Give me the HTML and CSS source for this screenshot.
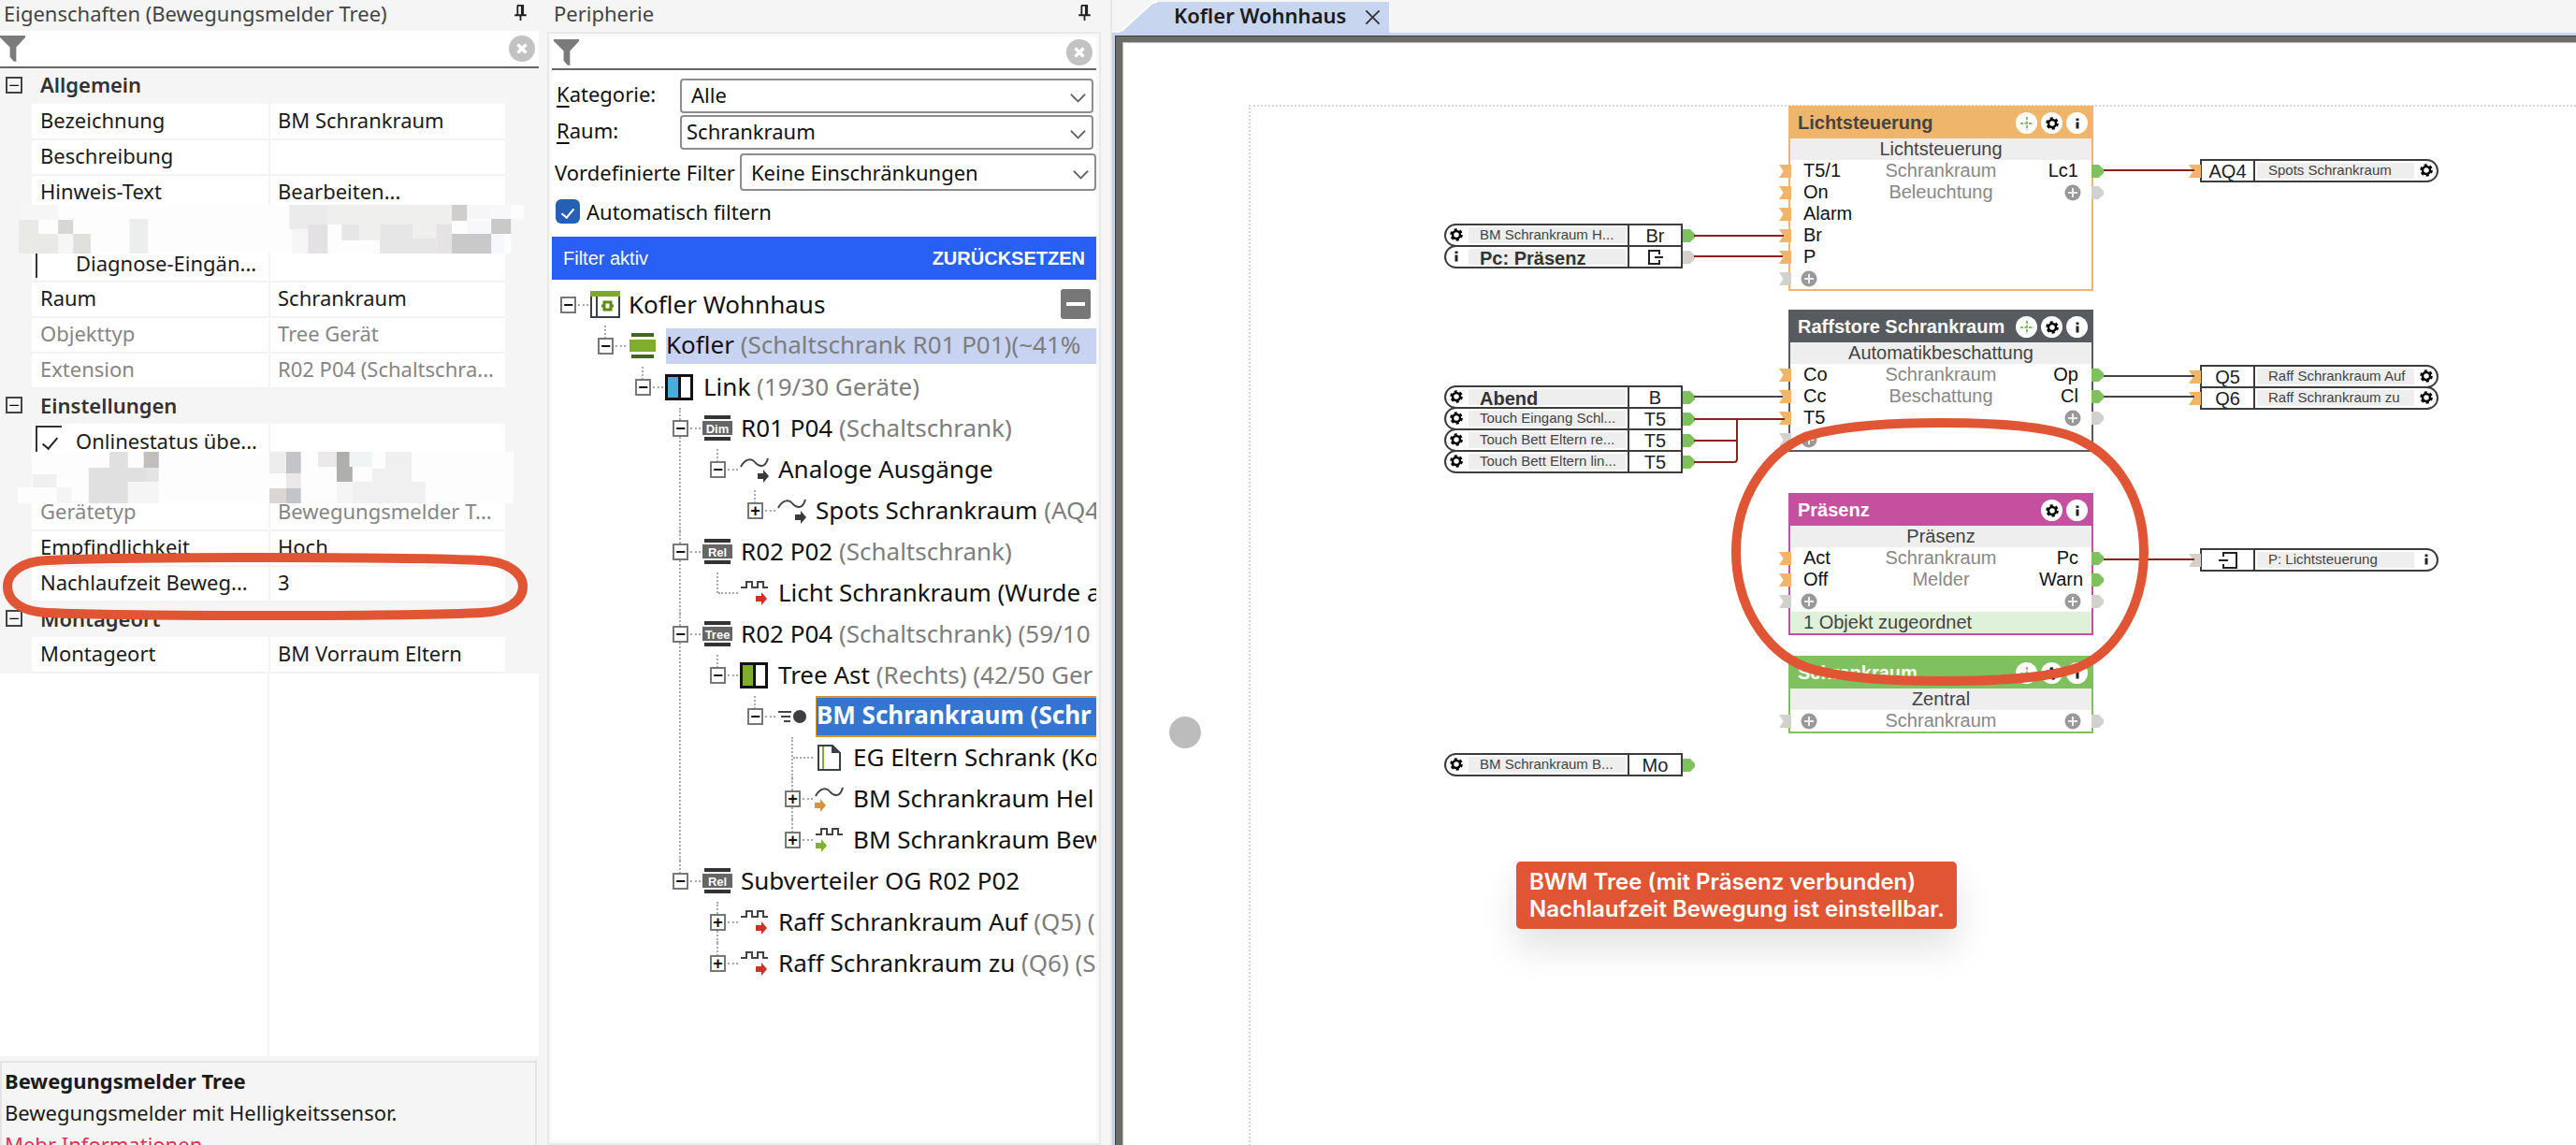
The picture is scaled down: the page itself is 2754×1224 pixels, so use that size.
FILE: index.html
```html
<!DOCTYPE html>
<html lang="de">
<head>
<meta charset="utf-8">
<title>Kofler Wohnhaus</title>
<link rel="stylesheet" href="styles.css">
</head>
<body>
<svg class="defs" aria-hidden="true">
  <symbol id="pin" viewBox="0 0 16 20"><path d="M4 1h8M4.500 1v11M11 1v11M9.500 1v11M1 12.500h14M8 13v6" fill="none" stroke="#222" stroke-width="2"/></symbol>
  <symbol id="funnel" viewBox="0 0 28 30"><path d="M0 0h28v2L18 13v16l-3-.5-4-5V13L0 2z" fill="#7b7b7b"/></symbol>
  <symbol id="clear" viewBox="0 0 28 28"><circle cx="14" cy="14" r="14" fill="#c2c2c2"/><path d="M9.500 9.500l9 9M18.500 9.500l-9 9" stroke="#fff" stroke-width="3.500"/></symbol>
  <symbol id="chevron" viewBox="0 0 18 12"><path d="M1 1.500l8 8 8-8" fill="none" stroke="#666" stroke-width="2"/></symbol>
  <symbol id="house" viewBox="0 0 32 30"><path d="M1 3v25h30V3" fill="#fff" stroke="#3b4045" stroke-width="2"/><path d="M7 5v22" stroke="#3b4045" stroke-width="2"/><path d="M0 0h32v6H0z" fill="#7ea92c"/><path d="M15 12h7v8h-7zM12 16h3M22 16h3" fill="none" stroke="#5f8a16" stroke-width="3"/></symbol>
  <symbol id="server" viewBox="0 0 32 30"><path d="M2 7h28v13H2z" fill="#7fae2f"/><path d="M4 0h24v4H4zM4 23h24v4H4z" fill="#44661a"/></symbol>
  <symbol id="link" viewBox="0 0 30 28"><path d="M1.500 1.500h27v25h-27z" fill="#fff" stroke="#111" stroke-width="3"/><path d="M3 3h12v22H3z" fill="#4bacd9"/><path d="M15.500 2v24" stroke="#111" stroke-width="3"/></symbol>
  <symbol id="branch" viewBox="0 0 30 28"><path d="M1.500 1.500h27v25h-27z" fill="#fff" stroke="#111" stroke-width="3"/><path d="M3 3h12v22H3z" fill="#7fae2f"/><path d="M15.500 2v24" stroke="#111" stroke-width="3"/></symbol>
  <symbol id="rail" viewBox="0 0 32 28"><path d="M2 0h28v4H2zM2 23h28v4H2z" fill="#333"/><path d="M0 6h32v15H0z" fill="#666"/></symbol>
  <symbol id="wave" viewBox="0 0 32 14"><path d="M1 11C5 3 12 1 16 6s11 7 14-4" fill="none" stroke="#444" stroke-width="2"/></symbol>
  <symbol id="pulse" viewBox="0 0 32 10"><path d="M1 7h6V1h6v6h6V1h6v6h5" fill="none" stroke="#444" stroke-width="2"/></symbol>
  <symbol id="arrow" viewBox="0 0 12 14"><path d="M0 4h6V0l6 7-6 7v-4H0z" fill="currentColor"/></symbol>
  <symbol id="motion" viewBox="0 0 32 16"><path d="M1 3h14M4 8h10M7 13h7" stroke="#444" stroke-width="2"/><circle cx="24" cy="8" r="7" fill="#3f3f3f"/></symbol>
  <symbol id="page" viewBox="0 0 26 28"><path d="M1 1h15l8 8v18H1z" fill="#fff" stroke="#3b4045" stroke-width="2"/><path d="M15 0v9h9z" fill="#3b4045"/><path d="M6 2v24" stroke="#7fae2f" stroke-width="2"/></symbol>
  <symbol id="gear" viewBox="0 0 14 14"><circle cx="7" cy="7" r="4" fill="none" stroke="#000" stroke-width="2.500"/><circle cx="7" cy="7" r="5.800" fill="none" stroke="#000" stroke-width="2" stroke-dasharray="3.070 3"/></symbol>
  <symbol id="info" viewBox="0 0 14 14"><path d="M5.500 1.500h3v2.500h-3zM5.500 5.500h3v7h-3z" fill="#222"/></symbol>
  <symbol id="move" viewBox="0 0 14 14"><path d="M7 0v14M0 7h14" stroke="#7fc15e" stroke-width="2" stroke-dasharray="3 1.500"/></symbol>
  <symbol id="plus" viewBox="0 0 18 18"><circle cx="9" cy="9" r="8.500" fill="#999"/><path d="M9 4v10M4 9h10" stroke="#eee" stroke-width="2"/></symbol>
  <symbol id="ref-out" viewBox="0 0 16 16"><path d="M12 5V1H1v14h11v-4M7 8h9" fill="none" stroke="#222" stroke-width="2"/></symbol>
  <symbol id="ref-in" viewBox="0 0 20 18"><path d="M5 5V1h14v16H5v-4M0 9h10" fill="none" stroke="#222" stroke-width="2"/></symbol>
</svg>

<div class="app">
  <section class="dock props">
    <header class="dock-title"><h2>Eigenschaften (Bewegungsmelder Tree)</h2><button class="plain" aria-label="Anheften"><svg class="pin"><use href="#pin"/></svg></button></header>
    <div class="filter"><svg class="funnel"><use href="#funnel"/></svg><input type="text" aria-label="Eigenschaften filtern"><button class="plain" aria-label="Filter löschen"><svg class="clear"><use href="#clear"/></svg></button></div>
    <div class="grid-wrap">
      <table class="grid">
        <colgroup><col class="c-tog"><col class="c-name"><col class="c-val"></colgroup>
        <tbody>
          <tr class="group"><td><button class="tog" aria-label="Einklappen">−</button></td><th colspan="2">Allgemein</th></tr>
          <tr><td></td><th>Bezeichnung</th><td>BM Schrankraum</td></tr>
          <tr><td></td><th>Beschreibung</th><td></td></tr>
          <tr><td></td><th>Hinweis-Text</th><td>Bearbeiten...</td></tr>
          <tr><td></td><th></th><td></td></tr>
          <tr><td></td><th class="tick"><label><input type="checkbox">Diagnose-Eingän...</label></th><td></td></tr>
          <tr><td></td><th>Raum</th><td>Schrankraum</td></tr>
          <tr class="off"><td></td><th>Objekttyp</th><td>Tree Gerät</td></tr>
          <tr class="off"><td></td><th>Extension</th><td>R02 P04 (Schaltschra...</td></tr>
          <tr class="group"><td><button class="tog" aria-label="Einklappen">−</button></td><th colspan="2">Einstellungen</th></tr>
          <tr><td></td><th class="tick"><label><input type="checkbox" checked>Onlinestatus übe...</label></th><td></td></tr>
          <tr><td></td><th></th><td></td></tr>
          <tr class="off"><td></td><th>Gerätetyp</th><td>Bewegungsmelder T...</td></tr>
          <tr><td></td><th>Empfindlichkeit</th><td>Hoch</td></tr>
          <tr><td></td><th>Nachlaufzeit Beweg...</th><td>3</td></tr>
          <tr class="group"><td><button class="tog" aria-label="Einklappen">−</button></td><th colspan="2">Montageort</th></tr>
          <tr><td></td><th>Montageort</th><td>BM Vorraum Eltern</td></tr>
        </tbody>
      </table>
    </div>
    <div class="grid-rest"></div>
    <footer class="about"><div><strong>Bewegungsmelder Tree</strong><p>Bewegungsmelder mit Helligkeitssensor.</p><a href="#info">Mehr Informationen</a></div></footer>

    <svg class="mosaic mosaic-a" viewBox="52 657 1411 156" preserveAspectRatio="none">
      <path fill="#fdfdfd" d="M52 657h1411v45h-36v111H52z"/>
      <path fill="#f6f6f6" d="M52 657h110v48H52zM162 750h42v63h-42zM815 735h45v78h-45zM1304 657h68v45h-68z"/>
      <path fill="#e9e9e6" d="M52 705h55v45h55v63H52z"/>
      <path fill="#d8d7d4" d="M162 705h42v45h-42z"/><path fill="#dfdfdc" d="M204 750h49v63h-49z"/>
      <path fill="#eceeed" d="M361 702h52v111h-52z"/>
      <path fill="#ebebeb" d="M808 657h107v63h-55v15h-52z"/>
      <path fill="#efefee" d="M915 657h347v63h-44v45h-66v-45h-92v50h-56v-50h-89z"/>
      <path fill="#e3e1e4" d="M860 720h55v93h-55z"/><path fill="#e6e6e6" d="M954 720h50v50h-50zM1061 720h91v45h66v48h-157z"/>
      <path fill="#e6e3e5" d="M1218 720h44v93h-44z"/>
      <path fill="#f6f8fc" d="M1304 708h68v42h-68zM1372 657h55v45h-55zM1372 750h37v63h-37z"/>
      <path fill="#cfcecd" d="M1262 657h42v51h-42z"/><path fill="#c9c9c9" d="M1372 702h55v48h-55zM1262 750h110v63h-110z"/>
    </svg>
    <svg class="mosaic mosaic-b" viewBox="50 249 1385 165" preserveAspectRatio="none">
      <path fill="#fdfdfd" d="M91 249h1344v165H50v-51h41z"/>
      <path fill="#e0e0e0" d="M306 249h52v51h50v45h-50v69H248V300h58z"/><path fill="#c0bfbe" d="M402 249h42v51h-42z"/>
      <path fill="#e4e4e4" d="M408 300h36v45h-36z"/><path fill="#f5f5f5" d="M358 345h86v69h-86zM159 363h42v51h-42zM941 345h44v69h-44z"/><path fill="#f0f0f0" d="M91 321h68v42H91zM1077 249h73v96h39v69H985v-69h55v-42h37z"/>
      <path fill="#eeedeb" d="M753 249h47v69h-47z"/><path fill="#c4c5cb" d="M800 249h41v69h-41zM800 366h41v48h-41z"/><path fill="#d9d6d3" d="M753 366h47v48h-47z"/>
      <path fill="#ebe8ea" d="M889 249h52v48h-52zM800 318h41v48h-41z"/><path fill="#afafae" d="M941 249h36v48h8v48h-44z"/><path fill="#f1f4f4" d="M977 249h63v48h-63z"/>
    </svg>
    <svg class="ring ring-row" viewBox="0 0 570 80"><path d="M8 40C8 25 24 13 50 12 150 8 420 8 515 12 541 13 559 25 559 40 559 56 541 67 515 68 420 72 150 72 50 68 24 67 8 56 8 40z"/></svg>
  </section>

  <section class="dock periph">
    <header class="dock-title"><h2>Peripherie</h2><button class="plain" aria-label="Anheften"><svg class="pin"><use href="#pin"/></svg></button></header>
    <div class="frame"><div class="frame-in">
      <div class="filter"><svg class="funnel"><use href="#funnel"/></svg><input type="text" aria-label="Peripherie filtern"><button class="plain" aria-label="Filter löschen"><svg class="clear"><use href="#clear"/></svg></button></div>
      <form class="criteria">
        <div class="line"><label for="kat"><u>K</u>ategorie:</label><span class="pick wide"><select id="kat"><option>Alle</option></select><svg><use href="#chevron"/></svg></span></div>
        <div class="line"><label for="raum"><u>R</u>aum:</label><span class="pick"><select id="raum"><option>Schrankraum</option></select><svg><use href="#chevron"/></svg></span></div>
        <div class="line preset"><label for="vor">Vordefinierte Filter</label><span class="pick wide"><select id="vor"><option>Keine Einschränkungen</option></select><svg><use href="#chevron"/></svg></span></div>
        <label class="auto"><input type="checkbox" checked>Automatisch filtern</label>
      </form>
      <div class="active"><span>Filter aktiv</span><button class="plain">ZURÜCKSETZEN</button></div>
      <div class="tree-wrap">
        <button class="collapse" aria-label="Alle einklappen"></button>
        <ul class="tree">
          <li><div class="row"><button class="tog">−</button><i></i><svg class="ico" height="30"><use href="#house" width="32" height="30"/></svg><span class="name">Kofler Wohnhaus</span></div>
          <ul>
            <li><div class="row"><button class="tog">−</button><i></i><svg class="ico" height="28"><use href="#server" width="32" height="30"/></svg><span class="name marked">Kofler <em>(Schaltschrank R01 P01)(~41%</em></span></div>
            <ul>
              <li><div class="row"><button class="tog">−</button><i></i><svg class="ico" height="28"><use href="#link" width="30" height="28"/></svg><span class="name">Link <em>(19/30 Geräte)</em></span></div>
              <ul>
                <li><div class="row"><button class="tog">−</button><i></i><svg class="ico" height="28"><use href="#rail" width="32" height="28"/><text x="16" y="19">Dim</text></svg><span class="name">R01 P04 <em>(Schaltschrank)</em></span></div>
                <ul>
                  <li><div class="row"><button class="tog">−</button><i></i><svg class="ico" height="28"><use href="#wave" width="32" height="14"/><use href="#arrow" class="a-dark" x="19" y="14" width="12" height="14"/></svg><span class="name">Analoge Ausgänge</span></div>
                  <ul>
                    <li><div class="row"><button class="tog">+</button><i></i><svg class="ico" height="28"><use href="#wave" width="32" height="14"/><use href="#arrow" class="a-dark" x="19" y="14" width="12" height="14"/></svg><span class="name">Spots Schrankraum <em>(AQ4</em></span></div></li>
                  </ul></li>
                </ul></li>
                <li><div class="row"><button class="tog">−</button><i></i><svg class="ico" height="28"><use href="#rail" width="32" height="28"/><text x="16" y="19">Rel</text></svg><span class="name">R02 P02 <em>(Schaltschrank)</em></span></div>
                <ul>
                  <li><div class="row leaf"><i></i><svg class="ico" height="26"><use href="#pulse" width="32" height="10"/><use href="#arrow" class="a-red" x="17" y="12" width="12" height="14"/></svg><span class="name">Licht Schrankraum (Wurde a</span></div></li>
                </ul></li>
                <li><div class="row"><button class="tog">−</button><i></i><svg class="ico" height="28"><use href="#rail" width="32" height="28"/><text x="16" y="19">Tree</text></svg><span class="name">R02 P04 <em>(Schaltschrank) (59/10</em></span></div>
                <ul>
                  <li><div class="row"><button class="tog">−</button><i></i><svg class="ico" height="28"><use href="#branch" width="30" height="28"/></svg><span class="name">Tree Ast <em>(Rechts) (42/50 Ger</em></span></div>
                  <ul>
                    <li><div class="row"><button class="tog">−</button><i></i><svg class="ico" height="16"><use href="#motion" width="32" height="16"/></svg><span class="name chosen">BM Schrankraum (Schr</span></div>
                    <ul>
                      <li><div class="row leaf"><i></i><svg class="ico" height="28"><use href="#page" x="3" width="26" height="28"/></svg><span class="name">EG Eltern Schrank (Ko</span></div></li>
                      <li><div class="row"><button class="tog">+</button><i></i><svg class="ico" height="28"><use href="#wave" width="32" height="14"/><use href="#arrow" class="a-amber" x="0" y="14" width="12" height="14"/></svg><span class="name">BM Schrankraum Hel</span></div></li>
                      <li><div class="row"><button class="tog">+</button><i></i><svg class="ico" height="26"><use href="#pulse" width="32" height="10"/><use href="#arrow" class="a-green" x="1" y="12" width="12" height="14"/></svg><span class="name">BM Schrankraum Bew</span></div></li>
                    </ul></li>
                  </ul></li>
                </ul></li>
                <li><div class="row"><button class="tog">−</button><i></i><svg class="ico" height="28"><use href="#rail" width="32" height="28"/><text x="16" y="19">Rel</text></svg><span class="name">Subverteiler OG R02 P02</span></div>
                <ul>
                  <li><div class="row"><button class="tog">+</button><i></i><svg class="ico" height="26"><use href="#pulse" width="32" height="10"/><use href="#arrow" class="a-red" x="17" y="12" width="12" height="14"/></svg><span class="name">Raff Schrankraum Auf <em>(Q5) (</em></span></div></li>
                  <li><div class="row"><button class="tog">+</button><i></i><svg class="ico" height="26"><use href="#pulse" width="32" height="10"/><use href="#arrow" class="a-red" x="17" y="12" width="12" height="14"/></svg><span class="name">Raff Schrankraum zu <em>(Q6) (S</em></span></div></li>
                </ul></li>
              </ul></li>
            </ul></li>
          </ul></li>
        </ul>
      </div>
    </div></div>
  </section>

  <main class="editor">
    <nav class="tabs"><div class="tab"><svg class="tab-bg" viewBox="0 0 290 35"><path d="M0 35 34 4Q37 2 40 2H288V35z" fill="#c7d5ee"/><path d="M2 33 34 4Q37 2 40 2" fill="none" stroke="#fff" stroke-width="2"/></svg><a href="#kofler">Kofler Wohnhaus</a><button class="plain" aria-label="Schließen"><svg class="x" viewBox="0 0 18 18"><path d="M1.500 1.500l15 15M16.500 1.500l-15 15" stroke="#333" stroke-width="2"/></svg></button></div></nav>
    <div class="canvas">
      <div class="sheet"></div>
      <span class="dot"></span>

      <div class="pill src p1"><svg class="mark"><use href="#gear"/></svg><span class="small">BM Schrankraum H...</span><b>Br</b></div>
      <div class="pill src p2 grey"><svg class="mark"><use href="#info"/></svg><span>Pc: Präsenz</span><b><svg class="ref"><use href="#ref-out"/></svg></b></div>
      <div class="pill src p3"><svg class="mark"><use href="#gear"/></svg><span>Abend</span><b>B</b></div>
      <div class="pill src p4"><svg class="mark"><use href="#gear"/></svg><span class="small">Touch Eingang Schl...</span><b>T5</b></div>
      <div class="pill src p5"><svg class="mark"><use href="#gear"/></svg><span class="small">Touch Bett Eltern re...</span><b>T5</b></div>
      <div class="pill src p6"><svg class="mark"><use href="#gear"/></svg><span class="small">Touch Bett Eltern lin...</span><b>T5</b></div>
      <div class="pill src p7"><svg class="mark"><use href="#gear"/></svg><span class="small">BM Schrankraum B...</span><b>Mo</b></div>

      <section class="block light">
        <header><h3>Lichtsteuerung</h3><button><svg><use href="#move"/></svg></button><button><svg><use href="#gear"/></svg></button><button><svg><use href="#info"/></svg></button></header>
        <p class="kind">Lichtsteuerung</p>
        <div class="ports">
          <ul class="in"><li>T5/1</li><li>On</li><li>Alarm</li><li>Br</li><li>P</li><li class="more"><svg><use href="#plus"/></svg></li></ul>
          <p class="place">Schrankraum<br>Beleuchtung</p>
          <ul class="out"><li>Lc1</li><li class="more"><svg><use href="#plus"/></svg></li></ul>
        </div>
      </section>
      <section class="block blind">
        <header><h3>Raffstore Schrankraum</h3><button><svg><use href="#move"/></svg></button><button><svg><use href="#gear"/></svg></button><button><svg><use href="#info"/></svg></button></header>
        <p class="kind">Automatikbeschattung</p>
        <div class="ports">
          <ul class="in"><li>Co</li><li>Cc</li><li>T5</li><li class="more"><svg><use href="#plus"/></svg></li></ul>
          <p class="place">Schrankraum<br>Beschattung</p>
          <ul class="out"><li>Op</li><li>Cl</li><li class="more"><svg><use href="#plus"/></svg></li></ul>
        </div>
      </section>
      <section class="block presence">
        <header><h3>Präsenz</h3><button><svg><use href="#gear"/></svg></button><button><svg><use href="#info"/></svg></button></header>
        <p class="kind">Präsenz</p>
        <div class="ports">
          <ul class="in"><li>Act</li><li>Off</li><li class="more"><svg><use href="#plus"/></svg></li></ul>
          <p class="place">Schrankraum<br>Melder</p>
          <ul class="out"><li>Pc</li><li>Warn</li><li class="more"><svg><use href="#plus"/></svg></li></ul>
        </div>
        <p class="note">1 Objekt zugeordnet</p>
      </section>
      <section class="block central">
        <header><h3>Schrankraum</h3><button><svg><use href="#move"/></svg></button><button><svg><use href="#gear"/></svg></button><button><svg><use href="#info"/></svg></button></header>
        <p class="kind">Zentral</p>
        <div class="ports">
          <ul class="in"><li class="more"><svg><use href="#plus"/></svg></li></ul>
          <p class="place">Schrankraum</p>
          <ul class="out"><li class="more"><svg><use href="#plus"/></svg></li></ul>
        </div>
      </section>

      <div class="pill dst q1"><b>AQ4</b><span class="small">Spots Schrankraum</span><svg class="mark"><use href="#gear"/></svg></div>
      <div class="pill dst q2"><b>Q5</b><span class="small">Raff Schrankraum Auf</span><svg class="mark"><use href="#gear"/></svg></div>
      <div class="pill dst q3"><b>Q6</b><span class="small">Raff Schrankraum zu</span><svg class="mark"><use href="#gear"/></svg></div>
      <div class="pill dst q4 grey"><b><svg class="ref-in"><use href="#ref-in"/></svg></b><span class="small">P: Lichtsteuerung</span><svg class="mark"><use href="#info"/></svg></div>

      <svg class="wires" width="1554" height="900">
        <g class="analog"><path d="M611 207h96M611 229h95M611 403h97M611 426h46M611 449h43q3 0 3-3V403M1049 137h97M1049 553h97"/></g>
        <g class="digital"><path d="M611 379h95M1049 357h97M1049 379h97"/></g>
      </svg>
      <svg class="ring ring-block" viewBox="0 0 460 300"><path d="M16 150C16 90 50 44 90 27 125 15 180 12 236 12 300 12 355 16 383 30 425 50 452 95 452 150 452 205 425 255 383 273 355 284 300 288 236 288 180 288 125 285 90 273 45 255 16 205 16 150z"/></svg>
      <p class="callout">BWM Tree (mit Präsenz verbunden)<br>Nachlaufzeit Bewegung ist einstellbar.</p>
    </div>
  </main>
</div>
</body>
</html>
```
FILE: styles.css
```css
* { box-sizing: border-box; }
html, body { height: 100%; }
body { margin: 0; overflow: hidden; background: #f5f5f5; color: #1b1b1b; font: 22px/36px "Noto Sans", "Open Sans", sans-serif; }
h2, h3, p, ul { margin: 0; padding: 0; font-weight: 400; font-size: inherit; }
ul { list-style: none; }
em { font-style: normal; color: #7d7d7d; }
.defs { position: absolute; width: 0; height: 0; }
.plain { border: 0; padding: 0; background: none; color: inherit; font: inherit; display: flex; }
.app { display: flex; height: 100vh; }

/* docked panels */
.dock { position: relative; display: flex; flex-direction: column; flex: none; overflow: hidden; }
.props { width: 583px; padding-right: 7px; }
.periph { width: 604px; padding: 0 10px 0 2px; }
.dock-title { display: flex; align-items: center; justify-content: space-between; height: 33px; padding: 0 12px 6px 4px; color: #444; line-height: 26px; }
.periph .dock-title { height: 34px; padding: 0 10px 7px 7px; }
.pin { width: 15px; height: 18px; }
.filter { display: flex; align-items: center; flex: none; height: 40px; padding: 0 4px 0 0; background: #fff; border-bottom: 2px solid #666; }
.filter input { flex: 1; min-width: 0; border: 0; outline: 0; background: none; font: inherit; }
.funnel { width: 27px; height: 29px; }
.clear { width: 28px; height: 28px; }

/* property grid */
.grid-wrap { background: #f5f5f5; }
.grid { width: 540px; table-layout: fixed; border-collapse: collapse; }
.c-tog { width: 34px; }
.c-name { width: 254px; }
.grid td, .grid th { height: 38px; padding: 0 0 4px 8px; font-weight: 400; text-align: left; line-height: 32px; background: #fff; border-bottom: 2px solid #f3f3f3; white-space: nowrap; overflow: hidden; }
.grid th { padding-left: 9px; border-right: 2px solid #f3f3f3; }
.grid tr td:first-child { background: none; border: 0; padding: 0 0 2px 6px; }
.grid .group th { background: none; font-weight: 600; color: #333; border: 0; }
.off { color: #858585; }
.tog { display: block; width: 18px; height: 18px; border: 2px solid #444; background: #fff; padding: 0; color: #111; font: 700 20px/13px "Liberation Sans", Arial, sans-serif; }
.grid .tog { background: none; font-weight: 400; }
.grid .tick { padding: 0 0 2px 4px; }
.tick label { display: flex; align-items: center; gap: 15px; height: 32px; }
.tick input { appearance: none; width: 28px; height: 32px; margin: 0; border: solid #333; border-width: 2px 0 0 2px; display: grid; place-items: center; }
.tick input:checked::before { content: ""; width: 7px; height: 14px; border: solid #222; border-width: 0 2px 2px 0; transform: rotate(40deg); }
.grid-rest { flex: 1; width: 576px; background: linear-gradient(90deg, #fff 286px, #f3f3f3 286px, #f3f3f3 288px, #fff 288px); }
.about { flex: none; height: 95px; padding-top: 5px; overflow: hidden; line-height: 34px; }
.about div { width: 574px; height: 120px; padding: 2px 0 0 3px; border: 2px solid #e4e4e4; background: #f5f5f5; }
.about strong { font-weight: 700; }
.about a { display: block; color: #e0324f; text-decoration: none; }
.mosaic { position: absolute; }
.mosaic-a { left: 20px; top: 219px; width: 540px; height: 52px; }
.mosaic-b { left: 19px; top: 483px; width: 530px; height: 55px; }

/* hand-drawn markers */
.ring { position: absolute; fill: none; stroke: #e05533; stroke-width: 10; }
.ring-row { left: 0; top: 587px; width: 570px; height: 80px; }

/* peripherals */
.frame { flex: 1; padding: 3px; border: 2px solid #e9e9e9; background: #f8f8f8; min-height: 0; }
.frame-in { height: 100%; background: #fff; overflow: hidden; }
.frame .filter { height: 36px; padding-left: 2px; }
.criteria { padding: 8px 3px 14px 5px; color: #111; }
.line { display: flex; height: 37px; margin-bottom: 2px; align-items: center; }
.line label { width: 132px; flex: none; padding-bottom: 4px; }
.line u { text-decoration-thickness: 2px; text-underline-offset: 4px; }
.pick { position: relative; flex: 1; height: 100%; }
.pick select { appearance: none; width: 100%; height: 100%; padding: 0 40px 3px 5px; border: 2px solid #8d8d8d; border-radius: 4px; background: #fff; color: #111; font: inherit; line-height: 30px; }
.pick.wide select { padding-left: 10px; }
.pick svg { position: absolute; right: 8px; top: 50%; width: 17px; height: 12px; margin-top: -3px; }
.preset { height: 40px; margin: 5px -3px 0 -2px; }
.preset label { width: 198px; padding-bottom: 0; }
.preset .pick select { padding-bottom: 0; }
.auto { display: flex; align-items: center; gap: 7px; height: 26px; margin: 9px 0 0 -1px; }
.auto input { appearance: none; width: 26px; height: 26px; margin: 0; border-radius: 6px; background: #2560b4; display: grid; place-items: center; }
.auto input::before { content: ""; width: 6px; height: 11px; border: solid #fff; border-width: 0 2px 2px 0; transform: rotate(40deg); }
.active { display: flex; align-items: center; justify-content: space-between; height: 46px; padding: 0 12px; background: #285ff5; color: #fff; font: 20px/24px "Liberation Sans", Arial, sans-serif; }
.active button { font-weight: 700; }
.tree-wrap { position: relative; padding: 5px 0 0 9px; font-size: 26px; line-height: 38px; color: #111; }
.collapse { position: absolute; right: 6px; top: 10px; width: 32px; height: 32px; border: 0; border-radius: 3px; background: linear-gradient(#fff, #fff) center / 20px 4px no-repeat #777; }
.tree ul { margin-left: 40px; }
.tree li { position: relative; }
.tree ul > li::before { content: ""; position: absolute; left: 7px; top: 0; height: 100%; border-left: 2px dotted #aaa; }
.tree ul > li:last-child::before { height: 22px; }
.row { position: relative; display: flex; align-items: center; height: 44px; white-space: nowrap; }
.row .tog { flex: none; width: 17px; height: 18px; border-color: #777; font-size: 18px; }
.row i { flex: none; width: 11px; margin: 0 2px; border-top: 2px dotted #aaa; }
.row.leaf i { width: 21px; margin-left: 9px; }
.ico { flex: none; width: 34px; margin-right: 7px; overflow: visible; }
.ico text { fill: #fff; font: 700 13px "Liberation Sans", Arial, sans-serif; text-anchor: middle; }
.name { flex: 1; min-width: 0; overflow: hidden; padding: 0 0 3px; }
.marked { height: 38px; line-height: 35px; background: #c7d3f0; }
.chosen { height: 44px; line-height: 37px; border: 2px solid #d9932f; border-width: 2px 0 2px 1px; background: #3375d0; color: #fff; font-weight: 700; }
.a-dark { color: #3a3a3a; } .a-red { color: #c8332a; } .a-amber { color: #d5963a; } .a-green { color: #82b132; }

/* editor */
.editor { flex: 1; min-width: 0; display: flex; flex-direction: column; border-left: 2px solid #e6e6e6; }
.tabs { height: 35px; }
.tab { position: relative; display: flex; align-items: center; gap: 20px; width: 299px; height: 35px; padding: 0 0 4px 66px; }
.tab-bg { position: absolute; left: 8px; top: 0; width: 290px; height: 35px; }
.tab a { position: relative; color: #1b1b1b; text-decoration: none; font-weight: 600; line-height: 28px; }
.tab button { position: relative; padding-top: 5px; }
.x { width: 17px; height: 17px; }
.canvas { position: relative; flex: 1; overflow: hidden; background: #fff; border: solid #6b6b68; border-width: 6px 0 0 7px; box-shadow: inset 1px 1px 0 #bbb, 0 0 0 1px #3c3c3c, 0 0 0 4px #c7d3ee; font: 20px/23px "Liberation Sans", Arial, sans-serif; margin: 4px 0 0 4px; }
.sheet { position: absolute; left: 135px; top: 67px; right: -4px; bottom: -4px; border: 2px dotted #d4d4d4; }
.dot { position: absolute; left: 50px; top: 721px; width: 34px; height: 34px; border-radius: 50%; background: #bcbcbc; }

.block { position: absolute; left: 712px; width: 326px; border: 2px solid var(--tone); background: #fff; }
.block header { display: flex; align-items: center; gap: 4px; height: 33px; padding: 0 4px 0 8px; background: var(--tone); color: #fff; }
.block h3 { flex: 1; font-weight: 700; white-space: nowrap; }
.block header button { display: grid; place-items: center; width: 23px; height: 23px; padding: 0; border: 0; border-radius: 50%; background: #fff; }
.block header svg { width: 14px; height: 14px; }
.kind { height: 23px; background: #eee; color: #444; text-align: center; }
.ports { display: grid; grid-template-columns: 70px 1fr 70px; }
.ports li { position: relative; height: 23px; padding: 0 14px; color: #111; }
.ports svg { display: block; width: 18px; height: 18px; margin-top: 2px; }
.out { text-align: right; }
.out svg { margin-left: auto; }
.ports .in .more, .ports .out .more { padding: 1px 11px; }
.place { color: #888; text-align: center; }
.ports li::before, .pill::before { content: ""; position: absolute; width: 13px; height: 14px; top: 5px; }
.in li::before { left: -12px; background: #efb56a; clip-path: polygon(0 0, 100% 0, 100% 100%, 0 100%, 35% 50%); }
.out li::before { right: -13px; background: #7fc15e; clip-path: polygon(0 0, 60% 0, 100% 35%, 100% 65%, 60% 100%, 0 100%); }
.ports .more::before { background: #d2d1cd; }
.note { height: 23px; padding-left: 14px; background: #dff1d8; color: #444; }
.light { --tone: #efb56a; top: 68px; }
.light h3 { color: #444; }
.blind { --tone: #575b60; top: 286px; }
.presence { --tone: #c4509f; top: 482px; }
.central { --tone: #7fc15e; top: 656px; }

.pill { position: absolute; display: flex; height: 25px; border: 2px solid #3c3c3c; background: #fff; color: #333; line-height: 23px; white-space: nowrap; }
.pill .mark { width: 14px; height: 14px; margin: 3px 4px; flex: none; }
.pill span { margin: 2px; background: #eee; flex: 1; line-height: 20px; font-weight: 700; padding-left: 12px; overflow: hidden; }
.pill .small { font-size: 15px; line-height: 16px; font-weight: 400; color: #444; }
.pill b { display: grid; place-items: center; font-weight: 400; color: #222; }
.src { left: 344px; width: 255px; border-radius: 13px 0 0 13px; }
.src b { width: 57px; border-left: 2px solid #3c3c3c; }
.src::before { right: -15px; top: 4px; background: #7fc15e; clip-path: polygon(0 0, 60% 0, 100% 35%, 100% 65%, 60% 100%, 0 100%); }
.dst { left: 1152px; width: 255px; border-radius: 0 13px 13px 0; }
.dst b { width: 57px; border-right: 2px solid #3c3c3c; }
.dst::before { left: -14px; top: 4px; background: #efb56a; clip-path: polygon(0 0, 100% 0, 100% 100%, 0 100%, 35% 50%); }
.pill.grey::before { background: #d2d1cd; }
.ref { width: 16px; height: 16px; }
.ref-in { width: 20px; height: 18px; }
.p1 { top: 194px; } .p2 { top: 217px; }
.p3 { top: 367px; } .p4 { top: 390px; } .p5 { top: 413px; } .p6 { top: 436px; } .p7 { top: 760px; }
.q1 { top: 125px; } .q2 { top: 345px; } .q3 { top: 368px; } .q4 { top: 541px; }
.wires { position: absolute; left: 0; top: 0; fill: none; stroke-width: 2; }
.analog { stroke: #8a2320; }
.digital { stroke: #444; }
.ring-block { left: 640px; top: 395px; width: 460px; height: 300px; }
.callout { position: absolute; left: 421px; top: 876px; padding: 7px 13px 7px 14px; border-radius: 5px; background: #e05533; color: #fff; font: 600 24px/29px Inter, "Open Sans", sans-serif; white-space: nowrap; box-shadow: 0 20px 40px rgba(0, 0, 0, .12); }
```
